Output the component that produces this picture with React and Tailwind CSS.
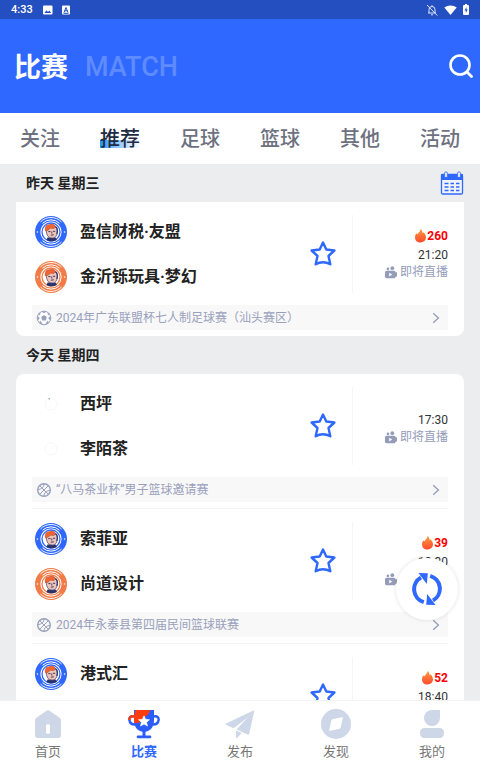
import React, { useState } from 'react';
import { clsx } from 'clsx';

const tabs = ['关注', '推荐', '足球', '篮球', '其他', '活动'];

const days = [
  {
    title: '昨天 星期三',
    matches: [
      {
        id: 1,
        teams: [
          { name: '盈信财税·友盟', badge: 'blue' },
          { name: '金沂铄玩具·梦幻', badge: 'orange' },
        ],
        hot: 260,
        time: '21:20',
        sport: 'football',
        league: '2024年广东联盟杯七人制足球赛（汕头赛区）',
      },
    ],
  },
  {
    title: '今天 星期四',
    matches: [
      {
        id: 2,
        teams: [
          { name: '西坪', badge: 'loading' },
          { name: '李陌茶', badge: 'empty' },
        ],
        time: '17:30',
        sport: 'basketball',
        league: '“八马茶业杯”男子篮球邀请赛',
      },
      {
        id: 3,
        teams: [
          { name: '索菲亚', badge: 'blue' },
          { name: '尚道设计', badge: 'orange' },
        ],
        hot: 39,
        time: '18:30',
        sport: 'basketball',
        league: '2024年永泰县第四届民间篮球联赛',
      },
      {
        id: 4,
        teams: [{ name: '港式汇', badge: 'blue' }],
        hot: 52,
        time: '18:40',
      },
    ],
  },
];

/* ---------- icons ---------- */

const Badge = ({ type }) => {
  if (type === 'loading' || type === 'empty') {
    return (
      <svg viewBox="0 0 32 32" className="size-8 shrink-0" aria-hidden="true">
        <circle cx="16" cy="16" r="6" fill="none" stroke="#f8f8f8" />
        {type === 'loading' && <path d="M13 10h2l-.6 2.4z" fill="#9db5b8" />}
      </svg>
    );
  }
  const color = type === 'blue' ? '#2f68ff' : '#f27c48';
  return (
    <svg viewBox="0 0 32 32" className="size-8 shrink-0" aria-hidden="true">
      <circle cx="16" cy="16" r="16" fill={color} />
      <path d="M5.500 6a14.500 14.500 0 0 1 21 0M5.500 26a14.500 14.500 0 0 0 21 0" fill="none" stroke="#fff" strokeWidth=".9" />
      <path d="M7.500 7.300a12.200 12.200 0 0 1 17 0M7.500 24.700a12.200 12.200 0 0 0 17 0" fill="none" stroke="#fff" strokeWidth="1" />
      <circle cx="2.400" cy="16" r=".8" fill="#fff" />
      <circle cx="29.600" cy="16" r=".8" fill="#fff" />
      <circle cx="16" cy="16" r="10.600" fill="#fff" />
      <circle cx="16" cy="16" r="9" fill="none" stroke={color} strokeWidth="1.300" />
      <path d="M12.500 21.500h8l1.500 2.200c-3 2-8 2-10.500.2z" fill="#27336b" />
      <path d="M11.300 13c0-3 9.500-4 10.500-.5.800 3 .6 6-1 8-1.500 2-5.800 2-7.600 0-1.500-1.800-2-4.500-1.900-7.500z" fill="#edc5bb" stroke="#5a4a70" strokeWidth=".8" />
      <path d="M10.500 15c-1-3.500.5-6.500 3.500-6.300 2.500-1.200 5.500-.5 6.500 1.800l-1.500 2-3.500-.2-3 2.200z" fill="#ef6430" stroke="#a84a35" strokeWidth=".5" />
      <path d="M20.500 10.500c2 1.500 2.300 4.500 1.300 7.500" fill="none" stroke="#2c3775" strokeWidth="1.200" />
      <path d="M13.300 15.600h2.200M18 15.300h2.200M15.800 19.200l3-.4M16.800 15.500v2" stroke="#2c3155" strokeWidth=".9" />
    </svg>
  );
};

const StarIcon = () => (
  <svg viewBox="0 0 28 28" className="size-7" aria-hidden="true">
    <path
      d="M14 2.500l3.300 7 8.100 1-5.900 5.500 1.800 8.300q-3.600-2-7.300-2t-7.300 2l1.800-8.300L2.600 10.500l8.100-1z"
      fill="none" stroke="#2f68ff" strokeWidth="2.400" strokeLinejoin="round"
    />
  </svg>
);

const FireIcon = () => (
  <svg viewBox="0 0 11 14" className="h-3.5 w-[11px]" aria-hidden="true">
    <defs>
      <linearGradient id="fire" x1="0" y1="0" x2="0" y2="1">
        <stop offset="0" stopColor="#ff9a3d" />
        <stop offset="1" stopColor="#ff4a2f" />
      </linearGradient>
    </defs>
    <path d="M5.600 0c1.300.9 1.900 2.300 2 4.300.4-.2.600-.6.700-1C10 4.600 11 6.500 11 8.300 11 11.400 8.700 13.500 5.500 13.500 2.400 13.500 0 11.400 0 8.400 0 6.700.5 5.300 1.500 4.200c.2.600.5 1 1 1.100C3.200 3.600 5.300 2.800 5.600 0z" fill="url(#fire)" />
  </svg>
);

const CameraIcon = () => (
  <svg viewBox="0 0 12 13" className="h-[13px] w-3" fill="#949cb9" aria-hidden="true">
    <circle cx="7.300" cy="2.200" r="1.900" />
    <circle cx="2.900" cy="2.900" r="1.300" />
    <path fillRule="evenodd" d="M1.500 4.800H9a1.500 1.500 0 0 1 1.500 1.400L12 6.300v4l-1.500.6A1.500 1.500 0 0 1 9 12.200H1.500A1.500 1.500 0 0 1 0 10.800V6.300a1.500 1.500 0 0 1 1.500-1.500zm2.700 2v3.600l3-1.800z" />
  </svg>
);

const FootballIcon = () => (
  <svg viewBox="0 0 16 16" className="size-4" aria-hidden="true">
    <circle cx="8" cy="8" r="6.800" fill="#fff" stroke="#98a0bc" strokeWidth="1" />
    <g fill="#98a0bc">
      <path d="M8 5l2.900 2.100-1.100 3.400H6.200L5.100 7.100z" />
      <path d="M5.200 1.400h5.600L8 3.300zM14.700 6l-.5 4.500-2-2.400zM1.300 6l2.500 2.100-2 2.400zM3.300 13l.8-2.400 3 3.900zM12.700 13l-.8-2.400-3 3.900zM2 5.500l1-2.300 1.600-.8L4 4.800zM14 5.500l-1-2.300-1.600-.8.6 2.400z" />
    </g>
  </svg>
);

const BasketballIcon = () => (
  <svg viewBox="0 0 16 16" className="size-4" fill="none" stroke="#98a0bc" aria-hidden="true">
    <circle cx="8" cy="8" r="6.300" strokeWidth="1.400" />
    <path d="M3.600 12.400l8.800-8.800M3.800 3.800l8.400 8.400M8 1.800c.2 3-2.500 5.800-6.200 5.700M8 14.200c-.2-3 2.500-5.800 6.200-5.700" strokeWidth="1" />
  </svg>
);

const ChevronIcon = () => (
  <svg viewBox="0 0 8 12" className="ml-auto h-3 w-2" aria-hidden="true">
    <path d="M1.200 1.200L6.400 6l-5.200 4.800" fill="none" stroke="#949cb9" strokeWidth="1.300" />
  </svg>
);

const CalendarIcon = () => (
  <svg viewBox="0 0 24 24" className="size-6" aria-hidden="true">
    <rect x="1.500" y="3.500" width="21" height="19.500" rx="1.200" fill="#f1f3f8" stroke="#2f68ff" strokeWidth="1.300" />
    <path d="M1 3h22v6H1z" fill="#2f68ff" />
    <rect x="4.600" y=".8" width="2.800" height="5.800" rx="1.400" fill="#eef1fb" stroke="#2f68ff" strokeWidth=".8" />
    <rect x="17.600" y=".8" width="2.800" height="5.800" rx="1.400" fill="#eef1fb" stroke="#2f68ff" strokeWidth=".8" />
    <path d="M4.500 12.500h4M10.500 12.500h3.500M16 12.500h3.500M4.500 16h4M10.500 16h3.500M16 16h3.500M4.500 19.500h4M10.500 19.500h3.500M16 19.500h3.500" stroke="#2f68ff" strokeWidth="1.600" />
  </svg>
);

const SearchIcon = () => (
  <svg viewBox="0 0 24 24" className="size-6" fill="none" stroke="#fff" aria-hidden="true">
    <circle cx="11" cy="11" r="9.500" strokeWidth="2.600" />
    <path d="M18.500 18.500l4 4" strokeWidth="2.800" strokeLinecap="round" />
  </svg>
);

const RefreshIcon = () => (
  <svg viewBox="0 0 30 34" className="h-[34px] w-[30px]" aria-hidden="true">
    <g fill="none" stroke="#2f68ff" strokeWidth="4">
      <path d="M11.800 30.200A13.500 13.500 0 0 1 9 5.500" />
      <path d="M18.200 3.800A13.500 13.500 0 0 1 21 28.500" />
    </g>
    <path d="M6.500 1l9.300.2-1 10.800z" fill="#2f68ff" />
    <path d="M23.500 33l-9.300-.2 1-10.800z" fill="#2f68ff" />
  </svg>
);

const HomeIcon = () => (
  <svg viewBox="0 0 32 32" className="size-8" aria-hidden="true">
    <path d="M14.500 2.800a2.500 2.500 0 0 1 3 0L28 10a3 3 0 0 1 1 2.300V27a3 3 0 0 1-3 3H6a3 3 0 0 1-3-3V12.300A3 3 0 0 1 4 10z" fill="#cdd7e7" />
    <rect x="14" y="16" width="4" height="10" rx="2" fill="#fff" />
  </svg>
);

const TrophyIcon = () => (
  <svg viewBox="0 0 32 32" className="size-8" aria-hidden="true">
    <path d="M26 8.500c3-.8 5 .8 4.600 3.500-.4 3-2.600 4.600-5.600 4.500M6 8.500C3 7.700 1 9.300 1.400 12c.4 3 2.600 4.600 5.600 4.500" fill="none" stroke="#2b5dfb" strokeWidth="2.400" />
    <path d="M6 2h20v10c0 7-3.500 11-8.500 11.800v3.700h4.500a1.300 1.300 0 0 1 0 2.700H10a1.300 1.300 0 0 1 0-2.700h4.500v-3.700C9.500 23 6 19 6 12z" fill="#2b5dfb" />
    <path d="M7.500 2H22c-1 4-2.500 5.500-5.500 7-1 4-4 6-10 6.300L6 12l.3-5zM6.500 7.300C2.500 6.300 0 8.500.2 12h2.400c0-2.200 1.300-3 3.800-2.300z" fill="#ff3d0c" />
    <path d="M16 7.800l1.600 3.500 3.900.4-2.900 2.600.9 3.800-3.500-2-3.500 2 .9-3.800-2.900-2.600 3.900-.4z" fill="#fff" stroke="#fff" strokeWidth=".6" strokeLinejoin="round" />
  </svg>
);

const SendIcon = () => (
  <svg viewBox="0 0 32 32" className="size-8" fill="#cdd7e7" aria-hidden="true">
    <path d="M30.500 2L2 15.500c-.6.4-.6 1 0 1.300l7.500 3.400L25 8.500z" />
    <path d="M30.500 2L12.500 21.500l11 5c1 .4 1.500 0 1.800-1z" />
    <path d="M12 22.500V29c0 1.200.9 1.400 1.600.5l4-4.500z" />
  </svg>
);

const CompassIcon = () => (
  <svg viewBox="0 0 32 32" className="size-8" aria-hidden="true">
    <circle cx="16" cy="16" r="15" fill="#cdd7e7" />
    <path d="M23 9l-2.300 10.500a1.500 1.500 0 0 1-1.200 1.200L9 23l2.300-10.500a1.500 1.500 0 0 1 1.200-1.200z" fill="#fff" />
  </svg>
);

const UserIcon = () => (
  <svg viewBox="0 0 32 32" className="size-8" fill="#cdd7e7" aria-hidden="true">
    <path d="M16 2h8v8a8 8 0 1 1-8-8z" />
    <rect x="4" y="20" width="24" height="10" rx="4.500" />
  </svg>
);

const navItems = [
  { label: '首页', icon: HomeIcon },
  { label: '比赛', icon: TrophyIcon },
  { label: '发布', icon: SendIcon },
  { label: '发现', icon: CompassIcon },
  { label: '我的', icon: UserIcon },
];

/* ---------- sections ---------- */

const StatusBar = () => (
  <div className="flex h-[19px] shrink-0 items-center bg-[#244fc0] px-[11px] text-[11px] font-medium text-white">
    <span className="pt-0.5">4:33</span>
    <svg viewBox="0 0 10 10" className="ml-2.5 size-2.5" aria-hidden="true">
      <rect y=".5" width="9.500" height="9" rx="1" fill="#fff" />
      <path d="M1.500 8l2-2.800 1.500 1.700 1.300-1.300L8.200 8z" fill="#244fc0" />
    </svg>
    <svg viewBox="0 0 10 10" className="ml-2 size-2.5" aria-hidden="true">
      <rect x="1" y=".5" width="8" height="9" rx="1" fill="#fff" />
      <path d="M3 7.500l2-5 2 5M3.700 5.800h2.600M2.500 8.300h5" fill="none" stroke="#244fc0" strokeWidth="1" />
    </svg>
    <div className="ml-auto flex items-center gap-1.5">
      <svg viewBox="0 0 12 12" className="size-3" fill="none" stroke="#dbe4ff" aria-hidden="true">
        <path d="M3 9V5.500a3 3 0 0 1 6 0V9M2 9h8M6 1.200v1.300M5 10.800h2" />
        <path d="M1 1l10.300 10.500" />
      </svg>
      <svg viewBox="0 0 13 10" className="h-2.5 w-[13px]" aria-hidden="true">
        <path d="M6.500 10L.3 2.400C3.800-.3 9.200-.3 12.700 2.400z" fill="#fff" />
      </svg>
      <svg viewBox="0 0 6 11" className="h-[11px] w-1.5" aria-hidden="true">
        <path d="M2 0h2v1h1a1 1 0 0 1 1 1v8a1 1 0 0 1-1 1H1a1 1 0 0 1-1-1V2a1 1 0 0 1 1-1h1z" fill="#fff" />
        <path d="M3.500 3L1.500 6.500h1.300V9l1.900-3.500H3.500z" fill="#244fc0" />
      </svg>
    </div>
  </div>
);

const Match = ({ match }) => (
  <li className="mx-4 pt-[7px] pb-1.5">
    <div className="flex min-h-[90px]">
      <div className="flex flex-1 flex-col">
        {match.teams.map((team) => (
          <div key={team.name} className="flex h-[45px] items-center gap-[13px] pl-[3px]">
            <Badge type={team.badge} />
            <span className="text-[16px] font-bold text-[#222]">{team.name}</span>
          </div>
        ))}
      </div>
      <button type="button" aria-label="收藏" className="mr-[15px] self-center">
        <StarIcon />
      </button>
      <div className={clsx(
        'my-1.5 flex w-24 flex-col items-end border-l border-[#f5f5f6]',
        match.hot ? 'pt-2.5' : 'pt-[25px]'
      )}>
        {match.hot && (
          <div className="flex h-[22px] items-center gap-px text-[12px] font-bold text-[#f00]">
            <FireIcon />
            {match.hot}
          </div>
        )}
        <time className="text-[12px] leading-[17px] text-[#333]">{match.time}</time>
        <div className="flex h-4 items-center gap-[3px] text-[12px] leading-4 whitespace-nowrap text-[#949cb9]">
          <CameraIcon />
          即将直播
        </div>
      </div>
    </div>
    {match.league && (
      <a href="#" className="mt-1.5 flex h-[25px] items-center gap-1 bg-[#f8f8f8] pr-2 pl-1 text-[12px] text-[#98a0bc]">
        {match.sport === 'football' ? <FootballIcon /> : <BasketballIcon />}
        {match.league}
        <ChevronIcon />
      </a>
    )}
  </li>
);

const App = () => {
  const [tab, setTab] = useState('推荐');
  const [page, setPage] = useState('比赛');

  return (
    <div className="relative flex h-screen flex-col bg-[#ecedef] font-[Roboto,'Noto_Sans_CJK_SC',sans-serif]">
      <StatusBar />

      <header className="flex h-[94px] shrink-0 items-center bg-[#2f68ff] pr-[7px] pl-3.5">
        <h1 className="pt-1 text-[27px] font-bold text-white">比赛</h1>
        <span className="ml-[17px] pt-0.5 text-[27px] font-medium text-[#5e8bff]">MATCH</span>
        <button type="button" aria-label="搜索" className="ml-auto">
          <SearchIcon />
        </button>
      </header>

      <nav className="grid h-[51px] shrink-0 grid-cols-6 bg-white">
        {tabs.map((name) => (
          <button
            key={name}
            type="button"
            onClick={() => setTab(name)}
            className="flex items-center justify-center pt-px text-[20px] leading-7 font-medium text-[#6d7180]"
          >
            {name === tab ? (
              <span className="bg-linear-to-r from-[#1e96f5] to-white bg-[length:100%_8px] bg-[position:0_15px] bg-no-repeat text-[#222b45]">{name}</span>
            ) : name}
          </button>
        ))}
      </nav>

      <main className="min-h-0 flex-1 overflow-y-auto px-4 [scrollbar-width:none]">
        {days.map((day, i) => (
          <section key={day.title}>
            <div className="flex h-[38px] items-center justify-between pl-2.5">
              <h2 className="text-[14px] font-bold text-[#222]">{day.title}</h2>
              {i === 0 && (
                <button type="button" aria-label="日历">
                  <CalendarIcon />
                </button>
              )}
            </div>
            <ul className={clsx('divide-y divide-[#f4f4f5] bg-white', i === 0 ? 'rounded-b-lg' : 'rounded-lg')}>
              {day.matches.map((match) => <Match key={match.id} match={match} />)}
            </ul>
          </section>
        ))}
      </main>

      {/* floating refresh */}
      <button
        type="button"
        aria-label="刷新"
        className="absolute right-[22px] bottom-[148px] flex size-[62px] items-center justify-center rounded-full bg-white shadow-[0_0_4px_rgba(0,0,0,0.12)]"
      >
        <RefreshIcon />
      </button>

      {/* bottom nav */}
      <nav className="grid h-[68px] shrink-0 grid-cols-5 border-t border-[#f3f3f4] bg-white">
        {navItems.map(({ label, icon: Icon }) => (
          <button
            key={label}
            type="button"
            onClick={() => setPage(label)}
            className={clsx(
              'flex flex-col items-center pt-[7px] text-[13px] leading-5 whitespace-nowrap',
              page === label ? 'font-bold text-[#2f68ff]' : 'text-[#777]'
            )}
          >
            <Icon />
            <span className="mt-0.5">{label}</span>
          </button>
        ))}
      </nav>
    </div>
  );
};

export default App;
